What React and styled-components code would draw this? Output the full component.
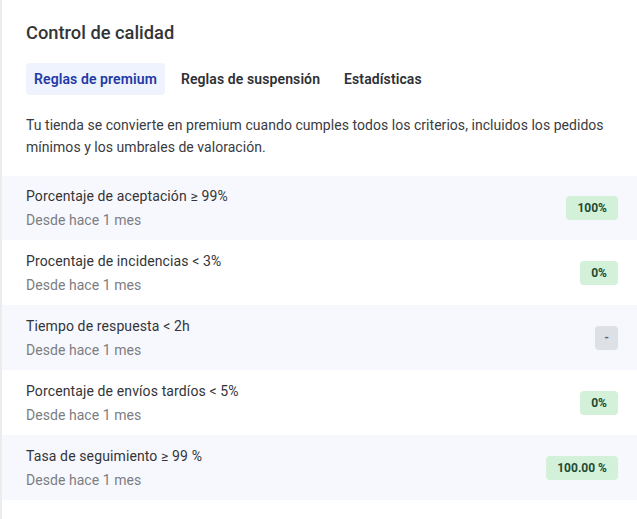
import React, { useState } from "react";
import styled, { createGlobalStyle } from "styled-components";

const Global = createGlobalStyle`
  html, body { margin: 0; padding: 0; background: #ffffff; }
  body { font-family: Roboto, "Liberation Sans", sans-serif; -webkit-font-smoothing: antialiased; }
  * { box-sizing: border-box; }
`;

const Panel = styled.section`
  width: 637px;
  min-height: 519px;
  border-left: 2px solid #ececec;
  background: #ffffff;
  padding: 21px 0 0 0;
  color: #333333;
`;

const Header = styled.div`
  padding: 0 19px 0 24px;
`;

const Title = styled.h2`
  margin: 0;
  font-size: 18.3px;
  line-height: 24px;
  font-weight: 500;
  color: #333438;
`;

const Tabs = styled.div`
  display: flex;
  gap: 8px;
  margin-top: 18px;
`;

const Tab = styled.button`
  border: none;
  border-radius: 4px;
  height: 32px;
  padding: 0 8px;
  font-family: inherit;
  font-size: 14px;
  font-weight: 600;
  letter-spacing: 0.1px;
  cursor: pointer;
  background: ${(p) => (p.$active ? "#eef3fd" : "transparent")};
  color: ${(p) => (p.$active ? "#1f3aa6" : "#2e3036")};
`;

const Description = styled.p`
  margin: 19px 0 18px;
  font-size: 14px;
  line-height: 22px;
  color: #3a3b40;
  letter-spacing: 0.04px;
`;

const List = styled.div`
  display: flex;
  flex-direction: column;
`;

const Row = styled.div`
  display: flex;
  align-items: center;
  justify-content: space-between;
  height: 65px;
  padding: 0 19px 0 24px;
  background: ${(p) => (p.$shaded ? "#f7f8fd" : "#ffffff")};
  &:first-child { height: 64px; }
`;

const Info = styled.div`
  display: flex;
  flex-direction: column;
  gap: 4px;
`;

const RuleName = styled.div`
  font-size: 14px;
  line-height: 20px;
  letter-spacing: 0.12px;
  color: #333438;
`;

const Since = styled.div`
  font-size: 14px;
  line-height: 20px;
  letter-spacing: 0.05px;
  color: #7b7d82;
`;

const Badge = styled.span`
  display: inline-flex;
  align-items: center;
  justify-content: center;
  height: 24px;
  min-width: 23px;
  padding: ${(p) => (p.$empty ? "0 8px" : "0 11px")};
  border-radius: 4px;
  font-size: 12px;
  font-weight: 700;
  color: ${(p) => (p.$empty ? "#5c6470" : "#1e4a33")};
  background: ${(p) => (p.$empty ? "#dde1e6" : "#d3f1d9")};
`;

const rules = [
  { name: "Porcentaje de aceptación ≥ 99%", value: "100%" },
  { name: "Procentaje de incidencias < 3%", value: "0%" },
  { name: "Tiempo de respuesta < 2h", value: "-", empty: true },
  { name: "Porcentaje de envíos tardíos < 5%", value: "0%" },
  { name: "Tasa de seguimiento ≥ 99 %", value: "100.00 %" },
];

const tabs = ["Reglas de premium", "Reglas de suspensión", "Estadísticas"];

export default function App() {
  const [active, setActive] = useState(0);
  return (
    <>
      <Global />
      <Panel>
        <Header>
          <Title>Control de calidad</Title>
          <Tabs>
            {tabs.map((t, i) => (
              <Tab key={t} $active={i === active} onClick={() => setActive(i)}>
                {t}
              </Tab>
            ))}
          </Tabs>
          <Description>
            Tu tienda se convierte en premium cuando cumples todos los criterios, incluidos los pedidos
            mínimos y los umbrales de valoración.
          </Description>
        </Header>
        <List>
          {rules.map((r, i) => (
            <Row key={r.name} $shaded={i % 2 === 0}>
              <Info>
                <RuleName>{r.name}</RuleName>
                <Since>Desde hace 1 mes</Since>
              </Info>
              <Badge $empty={r.empty}>{r.value}</Badge>
            </Row>
          ))}
        </List>
      </Panel>
    </>
  );
}
